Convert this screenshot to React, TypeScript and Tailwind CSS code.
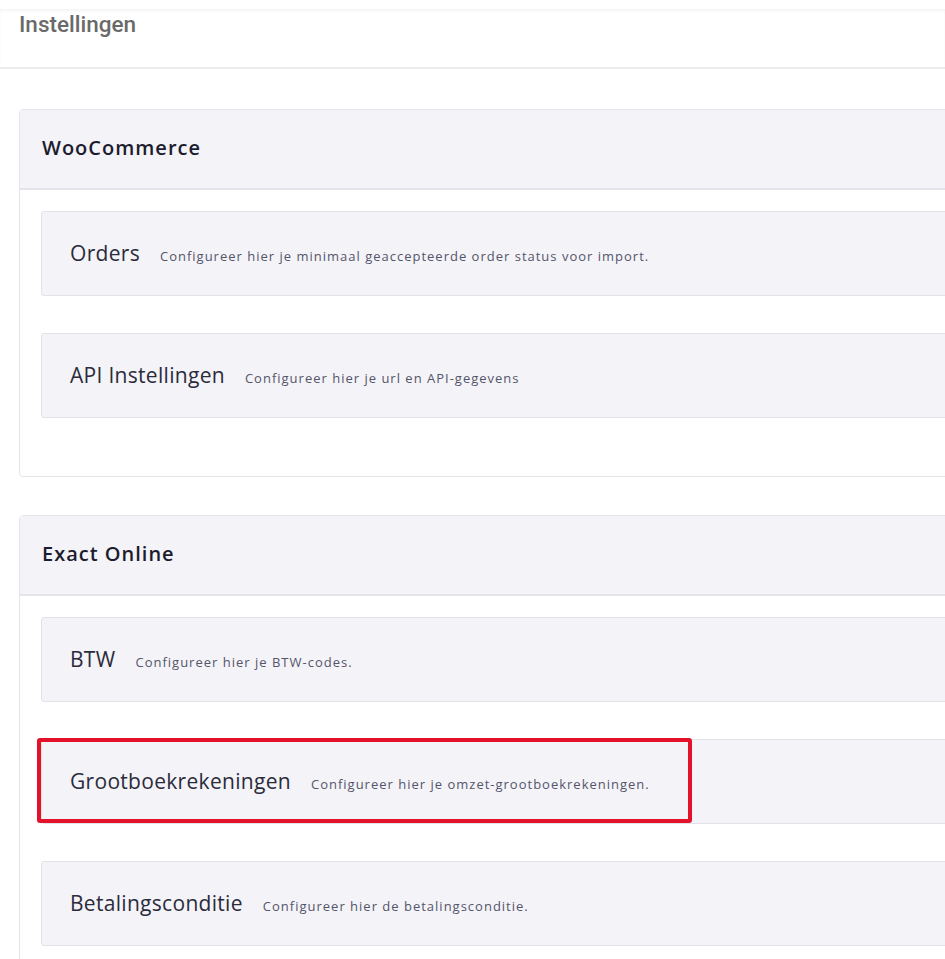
import React from "react";

const poppins = { fontFamily: '"Open Sans", "Noto Sans", sans-serif' };

function Row({ title, desc, highlight }: { title: string; desc: string; highlight?: boolean }) {
  return (
    <div className="relative h-[85px] bg-[#f3f3f8] border border-[#e2e2e8] rounded-[3px] flex items-baseline pl-[28px] pt-[29px] gap-[20px]">
      <span className="text-[21px] tracking-[0.3px] text-[#2b2b3b] leading-[25px]" style={poppins}>{title}</span>
      <span className="text-[13px] tracking-[1px] text-[#55556a] leading-[16px]" style={poppins}>{desc}</span>
      {highlight && (
        <div className="absolute left-[-5px] top-[-2px] w-[655px] h-[85px] border-[4px] border-[#e4112a] rounded-[3px]" />
      )}
    </div>
  );
}

function Section({ title, rows }: { title: string; rows: { title: string; desc: string; highlight?: boolean }[] }) {
  return (
    <div className="border border-[#e4e4ea] rounded-[4px] bg-white">
      <div className="h-[80px] bg-[#f3f3f8] border-b-2 border-[#e4e4ea] flex items-center px-[22px] pb-[2px]">
        <span className="text-[20px] font-semibold tracking-[1px] text-[#1c1c2e]" style={poppins}>{title}</span>
      </div>
      <div className="px-[21px] pt-[21px] pb-[21px] flex flex-col gap-[37px]">
        {rows.map((r) => (
          <Row key={r.title} {...r} />
        ))}
        <div className="h-0" />
      </div>
    </div>
  );
}

export default function App() {
  return (
    <div className="w-[945px] h-[959px] overflow-hidden bg-white">
      <div className="h-[9px] bg-white" />
      <div className="h-[60px] bg-white shadow-[inset_0_3px_4px_-2px_rgba(0,0,0,0.07)] border-b-2 border-[#ececec] pl-[19px]">
        <span className="text-[22.5px] font-medium text-[#6a6a6a] leading-[30px]" style={{ fontFamily: "Roboto, sans-serif" }}>
          Instellingen
        </span>
      </div>
      <div className="pl-[19px] pt-[40px] w-[980px] flex flex-col gap-[38px]">
        <Section
          title="WooCommerce"
          rows={[
            { title: "Orders", desc: "Configureer hier je minimaal geaccepteerde order status voor import." },
            { title: "API Instellingen", desc: "Configureer hier je url en API-gegevens" },
          ]}
        />
        <Section
          title="Exact Online"
          rows={[
            { title: "BTW", desc: "Configureer hier je BTW-codes." },
            { title: "Grootboekrekeningen", desc: "Configureer hier je omzet-grootboekrekeningen.", highlight: true },
            { title: "Betalingsconditie", desc: "Configureer hier de betalingsconditie." },
          ]}
        />
      </div>
    </div>
  );
}
